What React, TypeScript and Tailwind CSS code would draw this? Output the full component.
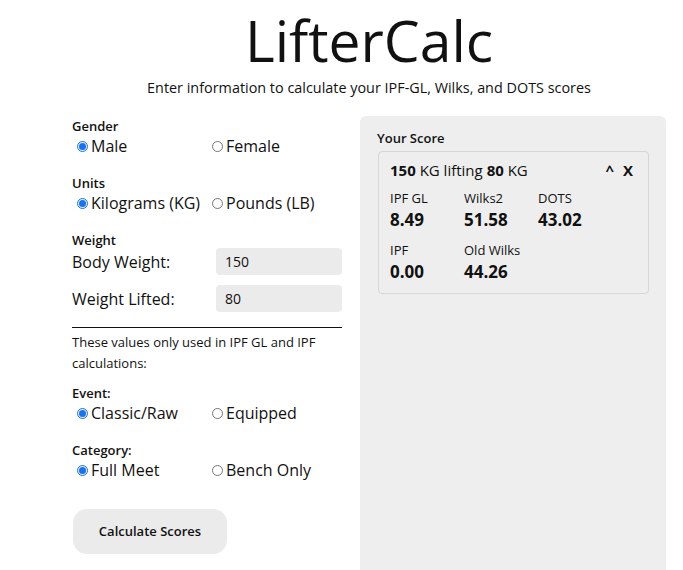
import React from "react";

const font = { fontFamily: '"Open Sans", "Noto Sans", sans-serif' };

function Radio({ checked }: { checked?: boolean }) {
  return checked ? (
    <span className="inline-flex w-[11px] h-[11px] rounded-full border border-[#1a73e8] bg-[#e8f0fc] items-center justify-center ml-[5px] mr-[3px] shrink-0">
      <span className="w-[7px] h-[7px] rounded-full bg-[#1a73e8]" />
    </span>
  ) : (
    <span className="inline-block w-[11px] h-[11px] rounded-full border border-[#767676] bg-white ml-[5px] mr-[3px] shrink-0" />
  );
}

function RadioRow({ a, b }: { a: string; b: string }) {
  return (
    <div className="grid grid-cols-[135px_1fr] h-[22px] items-center text-[16px] leading-[22px]">
      <label className="flex items-center whitespace-nowrap">
        <Radio checked />
        <span>{a}</span>
      </label>
      <label className="flex items-center whitespace-nowrap">
        <Radio />
        <span>{b}</span>
      </label>
    </div>
  );
}

function Label({ children }: { children: React.ReactNode }) {
  return <div className="text-[13px] leading-[18px] font-semibold">{children}</div>;
}

function Stat({ label, value }: { label: string; value: string }) {
  return (
    <div className="w-[74px]">
      <div className="text-[13px] leading-[18px]">{label}</div>
      <div className="text-[17px] leading-[22px] font-bold mt-[2px]">{value}</div>
    </div>
  );
}

export default function App() {
  return (
    <div className="w-[683px] h-[570px] overflow-hidden bg-white text-[#111]" style={font}>
      <div className="w-[738px]">
        <h1 className="text-center text-[57px] leading-[60px] font-normal pt-[10px]">LifterCalc</h1>
        <p className="text-center text-[14.4px] leading-[20px] mt-[8px]">
          Enter information to calculate your IPF-GL, Wilks, and DOTS scores
        </p>
        <div className="flex pl-[72px] gap-[18px] mt-[18px]">
          <div className="w-[270px] pt-[1px]">
            <Label>Gender</Label>
            <RadioRow a="Male" b="Female" />
            <div className="mt-[17px]">
              <Label>Units</Label>
            </div>
            <RadioRow a="Kilograms (KG)" b="Pounds (LB)" />
            <div className="mt-[17px]">
              <Label>Weight</Label>
            </div>
            <div className="flex items-center h-[27px] mt-[-1px]">
              <span className="w-[144px] text-[16px]">Body Weight:</span>
              <div className="w-[126px] h-[27px] rounded-[4px] bg-[#ebebeb] text-[14px] leading-[27px] pl-[9px]">150</div>
            </div>
            <div className="flex items-center h-[27px] mt-[10px]">
              <span className="w-[144px] text-[16px]">Weight Lifted:</span>
              <div className="w-[126px] h-[27px] rounded-[4px] bg-[#ebebeb] text-[14px] leading-[27px] pl-[9px]">80</div>
            </div>
            <div className="h-px bg-[#111] mt-[15px]" />
            <p className="text-[13px] leading-[21px] mt-[4px]">
              These values only used in IPF GL and IPF calculations:
            </p>
            <div className="mt-[10px]">
              <Label>Event:</Label>
            </div>
            <RadioRow a="Classic/Raw" b="Equipped" />
            <div className="mt-[17px]">
              <Label>Category:</Label>
            </div>
            <RadioRow a="Full Meet" b="Bench Only" />
            <button className="mt-[28px] ml-[1px] w-[154px] h-[45px] rounded-[14px] bg-[#ebebeb] text-[13px] font-semibold">
              Calculate Scores
            </button>
          </div>
          <div className="w-[306px] h-[480px] bg-[#eeeeee] rounded-[6px] pt-[13px] pl-[17px] pr-[17px]">
            <Label>Your Score</Label>
            <div className="mt-[4px] ml-[1px] border border-[#d6d6d6] rounded-[4px] pt-[8px] pl-[11px] pr-[15px] pb-[10px]">
              <div className="flex justify-between text-[15px] leading-[20px]">
                <span>
                  <b className="font-bold">150</b> KG lifting <b className="font-bold">80</b> KG
                </span>
                <span className="font-bold flex gap-[9px]">
                  <span>^</span>
                  <span>X</span>
                </span>
              </div>
              <div className="flex mt-[9px]">
                <Stat label="IPF GL" value="8.49" />
                <Stat label="Wilks2" value="51.58" />
                <Stat label="DOTS" value="43.02" />
              </div>
              <div className="flex mt-[10px]">
                <Stat label="IPF" value="0.00" />
                <Stat label="Old Wilks" value="44.26" />
              </div>
            </div>
          </div>
        </div>
      </div>
    </div>
  );
}
